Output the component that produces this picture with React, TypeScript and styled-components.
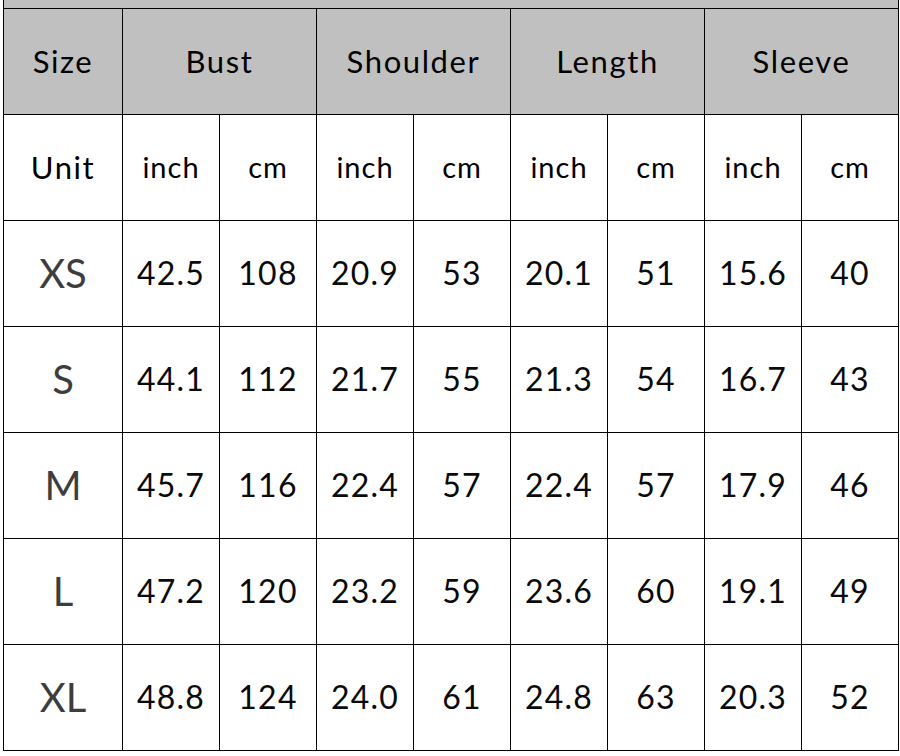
import React from 'react';
import styled, { createGlobalStyle } from 'styled-components';

const GlobalStyle = createGlobalStyle`
  body {
    margin: 0;
    background: #ffffff;
    font-family: Lato, "Open Sans", sans-serif;
  }
`;

const Page = styled.div`
  padding-left: 3px;
`;

const Grid = styled.div`
  display: grid;
  grid-template-columns: 118px repeat(8, 96px);
  grid-template-rows: 8px;
  grid-auto-rows: 105px;
  gap: 1px;
  padding: 0 1px 1px 1px;
  width: max-content;
  background: #000000;
`;

const TopStrip = styled.div`
  grid-column: 1 / -1;
  background: #c0c0c0;
`;

const Cell = styled.div<{ $span?: number; $head?: boolean }>`
  grid-column: span ${p => p.$span ?? 1};
  display: flex;
  align-items: center;
  justify-content: center;
  background: ${p => (p.$head ? '#c0c0c0' : '#ffffff')};
  color: #000000;
`;

const HeadText = styled.span`
  font-size: 31px;
  letter-spacing: 1.6px;
  padding-bottom: 2px;
`;

const UnitText = styled.span`
  font-size: 29px;
  letter-spacing: 1px;
  padding-bottom: 2px;
`;

const SizeText = styled.span`
  font-size: 40px;
  color: #3d3d3d;
  padding-bottom: 2px;
`;

const Value = styled.span`
  font-size: 32px;
  letter-spacing: 1.2px;
  color: #0a0a0a;
  padding-bottom: 2px;
`;

const groups = ['Bust', 'Shoulder', 'Length', 'Sleeve'];

const rows: { size: string; values: string[] }[] = [
  { size: 'XS', values: ['42.5', '108', '20.9', '53', '20.1', '51', '15.6', '40'] },
  { size: 'S', values: ['44.1', '112', '21.7', '55', '21.3', '54', '16.7', '43'] },
  { size: 'M', values: ['45.7', '116', '22.4', '57', '22.4', '57', '17.9', '46'] },
  { size: 'L', values: ['47.2', '120', '23.2', '59', '23.6', '60', '19.1', '49'] },
  { size: 'XL', values: ['48.8', '124', '24.0', '61', '24.8', '63', '20.3', '52'] },
];

const App: React.FC = () => {
  return (
    <Page>
      <GlobalStyle />
      <Grid>
        <TopStrip />
        <Cell $head>
          <HeadText>Size</HeadText>
        </Cell>
        {groups.map(g => (
          <Cell key={g} $head $span={2}>
            <HeadText>{g}</HeadText>
          </Cell>
        ))}
        <Cell>
          <HeadText>Unit</HeadText>
        </Cell>
        {groups.map(g => (
          <React.Fragment key={g}>
            <Cell>
              <UnitText>inch</UnitText>
            </Cell>
            <Cell>
              <UnitText>cm</UnitText>
            </Cell>
          </React.Fragment>
        ))}
        {rows.map(r => (
          <React.Fragment key={r.size}>
            <Cell>
              <SizeText>{r.size}</SizeText>
            </Cell>
            {r.values.map((v, i) => (
              <Cell key={i}>
                <Value>{v}</Value>
              </Cell>
            ))}
          </React.Fragment>
        ))}
      </Grid>
    </Page>
  );
};

export default App;
